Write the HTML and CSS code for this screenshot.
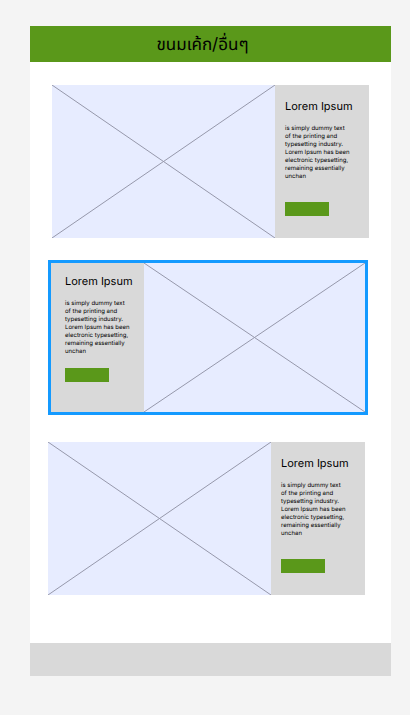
FILE: index.html
```html
<!DOCTYPE html>
<html lang="th">
<head>
<meta charset="utf-8">
<meta name="viewport" content="width=device-width, initial-scale=1">
<title>ขนมเค้ก/อื่นๆ</title>
<link rel="stylesheet" href="styles.css">
</head>
<body>
<div class="page">
  <header class="header"><h1 class="heading">ขนมเค้ก/อื่นๆ</h1></header>
  <main class="list">
    <article class="card card-first">
      <div class="picture"><svg class="cross" viewBox="0 0 100 100" preserveAspectRatio="none" aria-hidden="true"><path d="M0 0L100 100M100 0L0 100"/></svg></div>
      <div class="panel">
        <h2 class="title">Lorem Ipsum</h2>
        <p class="text">is simply dummy text<br>of the printing and<br>typesetting industry.<br>Lorem Ipsum has been<br>electronic typesetting,<br>remaining essentially<br>unchan</p>
        <button class="action" type="button" aria-label="Lorem Ipsum"></button>
      </div>
    </article>
    <article class="card card-selected">
      <div class="panel">
        <h2 class="title">Lorem Ipsum</h2>
        <p class="text">is simply dummy text<br>of the printing and<br>typesetting industry.<br>Lorem Ipsum has been<br>electronic typesetting,<br>remaining essentially<br>unchan</p>
        <button class="action" type="button" aria-label="Lorem Ipsum"></button>
      </div>
      <div class="picture"><svg class="cross" viewBox="0 0 100 100" preserveAspectRatio="none" aria-hidden="true"><path d="M0 0L100 100M100 0L0 100"/></svg></div>
    </article>
    <article class="card card-last">
      <div class="picture"><svg class="cross" viewBox="0 0 100 100" preserveAspectRatio="none" aria-hidden="true"><path d="M0 0L100 100M100 0L0 100"/></svg></div>
      <div class="panel">
        <h2 class="title">Lorem Ipsum</h2>
        <p class="text">is simply dummy text<br>of the printing and<br>typesetting industry.<br>Lorem Ipsum has been<br>electronic typesetting,<br>remaining essentially<br>unchan</p>
        <button class="action" type="button" aria-label="Lorem Ipsum"></button>
      </div>
    </article>
  </main>
  <footer class="footer"></footer>
</div>
</body>
</html>
```
FILE: styles.css
```css
* { box-sizing: border-box; }
body {
  margin: 0;
  padding: 26px 19px 39px 30px;
  background: #f4f4f4;
  color: #000;
  font-family: Inter, "Noto Sans", "Noto Sans Thai", sans-serif;
  text-rendering: geometricPrecision;
}
.page { background: #fff; }
.header {
  padding: 7px 6px 5px;
  background: #5a981a;
  text-align: center;
}
.heading {
  margin: 0;
  padding-right: 16px;
  font-size: 17px;
  line-height: 24px;
  font-weight: 400;
}
.list { padding: 23px 22px 48px 18px; }
.card { display: flex; }
.card-first { margin: 0 0 22px 4px; }
.card-selected {
  margin: 0 1px 27px 0;
  border: 3px solid #149aff;
}
.card-last { margin-right: 4px; }
.picture {
  position: relative;
  flex: 1;
  background: #e7ecff;
}
.cross {
  position: absolute;
  inset: 0;
  width: 100%;
  height: 100%;
}
.cross path {
  fill: none;
  stroke: #9698ab;
  stroke-width: 1px;
  vector-effect: non-scaling-stroke;
}
.panel {
  flex: none;
  width: 94px;
  padding: 13px 10px 22px;
  background: #d9d9d9;
}
.title {
  margin: 0 0 11px;
  font-size: 11px;
  line-height: 16px;
  font-weight: 400;
  white-space: nowrap;
}
.text {
  margin: 0 0 21px;
  font-size: 6px;
  line-height: 8px;
  white-space: nowrap;
}
.action {
  display: block;
  width: 44px;
  height: 14px;
  padding: 0;
  border: 0;
  background: #5a981a;
}
.card-selected .panel {
  width: 93px;
  padding: 10px 5px 30px 14px;
}
.card-selected .text { margin-bottom: 12px; }
.footer {
  height: 33px;
  background: #d9d9d9;
}
```
